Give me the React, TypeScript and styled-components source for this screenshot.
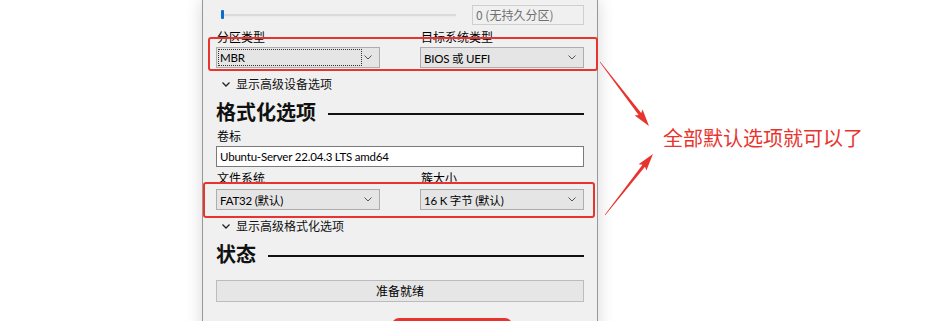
import React from 'react';
import styled, { createGlobalStyle } from 'styled-components';

const GlobalStyle = createGlobalStyle`
  html, body {
    margin: 0;
    padding: 0;
    background: #ffffff;
  }
  body {
    font-family: "Lato", "Noto Sans CJK SC", sans-serif;
  }
`;

const UI_FONT = `"Lato", "Noto Sans CJK SC", sans-serif`;
const CJK_FONT = `"Noto Sans CJK SC", "Noto Sans", sans-serif`;
const RED = '#e8342e';

const Page = styled.div`
  position: relative;
  width: 927px;
  height: 321px;
  overflow: hidden;
  display: flex;
  align-items: flex-start;
  background: #fff;
`;

const Dialog = styled.div`
  margin-left: 202px;
  width: 396px;
  height: 340px;
  background: #f0f0f0;
  border-left: 1px solid #979797;
  border-right: 1px solid #979797;
  box-shadow: 0 0 16px rgba(0, 0, 0, 0.16);
  padding: 5px 13px 0 13px;
  box-sizing: border-box;
  display: flex;
  flex-direction: column;
  font-family: ${UI_FONT};
  font-size: 12px;
  color: #000;
`;

const SliderRow = styled.div`
  display: flex;
  align-items: center;
  gap: 16px;
  height: 20px;
`;

const Track = styled.div`
  position: relative;
  flex: 1;
  height: 2px;
  margin-left: 5px;
  background: #dadada;
  border-bottom: 1px solid #ebebeb;
`;

const Thumb = styled.div`
  position: absolute;
  left: 0;
  top: -4px;
  width: 3px;
  height: 9px;
  background: #0c6dd0;
  border-radius: 1px;
`;

const ReadOnlyBox = styled.div`
  width: 112px;
  height: 20px;
  box-sizing: border-box;
  border: 1px solid #cfcfcf;
  background: #f0f0f0;
  color: #707070;
  font-family: ${CJK_FONT};
  font-size: 12px;
  line-height: 18px;
  padding-left: 3px;
`;

const Pair = styled.div<{ $mt: number }>`
  display: grid;
  grid-template-columns: 164px 164px;
  column-gap: 40px;
  margin-top: ${(p) => p.$mt}px;
`;

const Label = styled.div`
  font-family: ${CJK_FONT};
  font-size: 12px;
  line-height: 16px;
  height: 16px;
  padding-left: 1px;
`;

const Highlight = styled.div<{ $t: number; $r: number; $b: number; $l: number; $mt: number }>`
  position: relative;
  margin-top: ${(p) => p.$mt}px;
  &::after {
    content: '';
    position: absolute;
    top: ${(p) => -p.$t}px;
    right: ${(p) => -p.$r}px;
    bottom: ${(p) => -p.$b}px;
    left: ${(p) => -p.$l}px;
    border: 2.5px solid ${RED};
    border-radius: 3px;
    pointer-events: none;
  }
`;

const SelectGrid = styled.div`
  display: grid;
  grid-template-columns: 164px 164px;
  column-gap: 40px;
`;

const Select = styled.div<{ $focus?: boolean }>`
  position: relative;
  height: 21px;
  box-sizing: border-box;
  border: 1px solid #adadad;
  background: #e5e5e5;
  display: flex;
  align-items: center;
  padding-left: 3px;
  &::before {
    content: '';
    display: ${(p) => (p.$focus ? 'block' : 'none')};
    position: absolute;
    left: 1px;
    top: 1px;
    bottom: 1px;
    right: 17px;
    border: 1px dotted #333;
  }
`;

const SelectText = styled.span`
  flex: 1;
  white-space: nowrap;
  font-family: ${UI_FONT};
  font-size: 11.5px;
  letter-spacing: -0.2px;
`;

const Caret = styled.svg`
  width: 8px;
  height: 5px;
  margin-right: 7px;
`;

const Toggle = styled.div`
  display: flex;
  align-items: center;
  gap: 6px;
  margin-top: 8px;
  height: 16px;
  padding-left: 6px;
  font-family: ${CJK_FONT};
  font-size: 12px;
  line-height: 16px;
  color: #111;
`;

const SectionHead = styled.div<{ $mt: number }>`
  display: flex;
  align-items: center;
  gap: 12px;
  margin-top: ${(p) => p.$mt}px;
  height: 26px;
`;

const SectionTitle = styled.span`
  font-family: ${CJK_FONT};
  font-size: 20px;
  font-weight: 700;
  line-height: 26px;
  color: #111;
`;

const Rule = styled.div`
  flex: 1;
  height: 2px;
  background: #111;
  margin-top: 3px;
`;

const TextInput = styled.div`
  margin-top: 2px;
  height: 21px;
  box-sizing: border-box;
  border: 1px solid #7a7a7a;
  background: #fff;
  padding-left: 3px;
  line-height: 19px;
  font-family: ${UI_FONT};
  font-size: 11.5px;
  letter-spacing: -0.2px;
`;

const StatusBar = styled.div`
  margin-top: 13px;
  height: 22px;
  box-sizing: border-box;
  border: 1px solid #bcbcbc;
  background: #e6e6e6;
  text-align: center;
  line-height: 20px;
  font-family: ${CJK_FONT};
  font-size: 12px;
`;

const ButtonRow = styled.div`
  display: flex;
  margin-top: 16px;
  padding-left: 176px;
`;

const MarkedButton = styled.div`
  width: 120px;
  height: 26px;
  box-sizing: border-box;
  border: 3px solid ${RED};
  border-radius: 7px;
`;

const Note = styled.div`
  margin-left: 65px;
  margin-top: 125px;
  font-family: ${CJK_FONT};
  font-size: 20px;
  line-height: 26px;
  color: ${RED};
  white-space: nowrap;
`;

const Overlay = styled.svg`
  position: absolute;
  left: 0;
  top: 0;
  width: 927px;
  height: 321px;
  pointer-events: none;
`;

const ChevronDown = ({ color = '#555' }: { color?: string }) => (
  <Caret viewBox="0 0 8 5">
    <polyline points="0.5,0.5 4,4 7.5,0.5" fill="none" stroke={color} strokeWidth="1" />
  </Caret>
);

const ToggleIcon = styled.svg`
  width: 8px;
  height: 5px;
`;

const arrowPoints = (x1: number, y1: number, x2: number, y2: number) => {
  const len = Math.hypot(x2 - x1, y2 - y1);
  const dx = (x2 - x1) / len;
  const dy = (y2 - y1) / len;
  const nx = -dy;
  const ny = dx;
  const head = 15;
  const bx = x2 - dx * head;
  const by = y2 - dy * head;
  const pts: [number, number][] = [
    [x1 + nx * 0.3, y1 + ny * 0.3],
    [bx + nx * 1.6, by + ny * 1.6],
    [bx - dx * 2 + nx * 5, by - dy * 2 + ny * 5],
    [x2, y2],
    [bx - dx * 2 - nx * 5, by - dy * 2 - ny * 5],
    [bx - nx * 1.6, by - ny * 1.6],
    [x1 - nx * 0.3, y1 - ny * 0.3],
  ];
  return pts.map((p) => p.map((v) => v.toFixed(1)).join(',')).join(' ');
};

const App = () => {
  return (
    <>
      <GlobalStyle />
      <Page>
        <Dialog>
          <SliderRow>
            <Track>
              <Thumb />
            </Track>
            <ReadOnlyBox>0 (无持久分区)</ReadOnlyBox>
          </SliderRow>

          <Pair $mt={4}>
            <Label>分区类型</Label>
            <Label>目标系统类型</Label>
          </Pair>
          <Highlight $mt={2} $t={10} $r={14} $b={3} $l={8}>
            <SelectGrid>
              <Select $focus>
                <SelectText>MBR</SelectText>
                <ChevronDown />
              </Select>
              <Select>
                <SelectText>BIOS 或 UEFI</SelectText>
                <ChevronDown />
              </Select>
            </SelectGrid>
          </Highlight>

          <Toggle>
            <ToggleIcon viewBox="0 0 8 5">
              <polyline points="0.5,0.5 4,4 7.5,0.5" fill="none" stroke="#222" strokeWidth="1.3" />
            </ToggleIcon>
            显示高级设备选项
          </Toggle>

          <SectionHead $mt={7}>
            <SectionTitle>格式化选项</SectionTitle>
            <Rule />
          </SectionHead>

          <Pair $mt={3}>
            <Label>卷标</Label>
          </Pair>
          <TextInput>Ubuntu-Server 22.04.3 LTS amd64</TextInput>

          <Pair $mt={3}>
            <Label>文件系统</Label>
            <Label>簇大小</Label>
          </Pair>
          <Highlight $mt={3} $t={7} $r={11} $b={8} $l={13}>
            <SelectGrid>
              <Select>
                <SelectText>FAT32 (默认)</SelectText>
                <ChevronDown />
              </Select>
              <Select>
                <SelectText>16 K 字节 (默认)</SelectText>
                <ChevronDown />
              </Select>
            </SelectGrid>
          </Highlight>

          <Toggle>
            <ToggleIcon viewBox="0 0 8 5">
              <polyline points="0.5,0.5 4,4 7.5,0.5" fill="none" stroke="#222" strokeWidth="1.3" />
            </ToggleIcon>
            显示高级格式化选项
          </Toggle>

          <SectionHead $mt={7}>
            <SectionTitle>状态</SectionTitle>
            <Rule />
          </SectionHead>

          <StatusBar>准备就绪</StatusBar>

          <ButtonRow>
            <MarkedButton />
          </ButtonRow>
        </Dialog>

        <Note>全部默认选项就可以了</Note>

        <Overlay viewBox="0 0 927 321">
          <polygon points={arrowPoints(600, 62, 649, 126)} fill={RED} />
          <polygon points={arrowPoints(605, 215, 653, 154)} fill={RED} />
        </Overlay>
      </Page>
    </>
  );
};

export default App;
